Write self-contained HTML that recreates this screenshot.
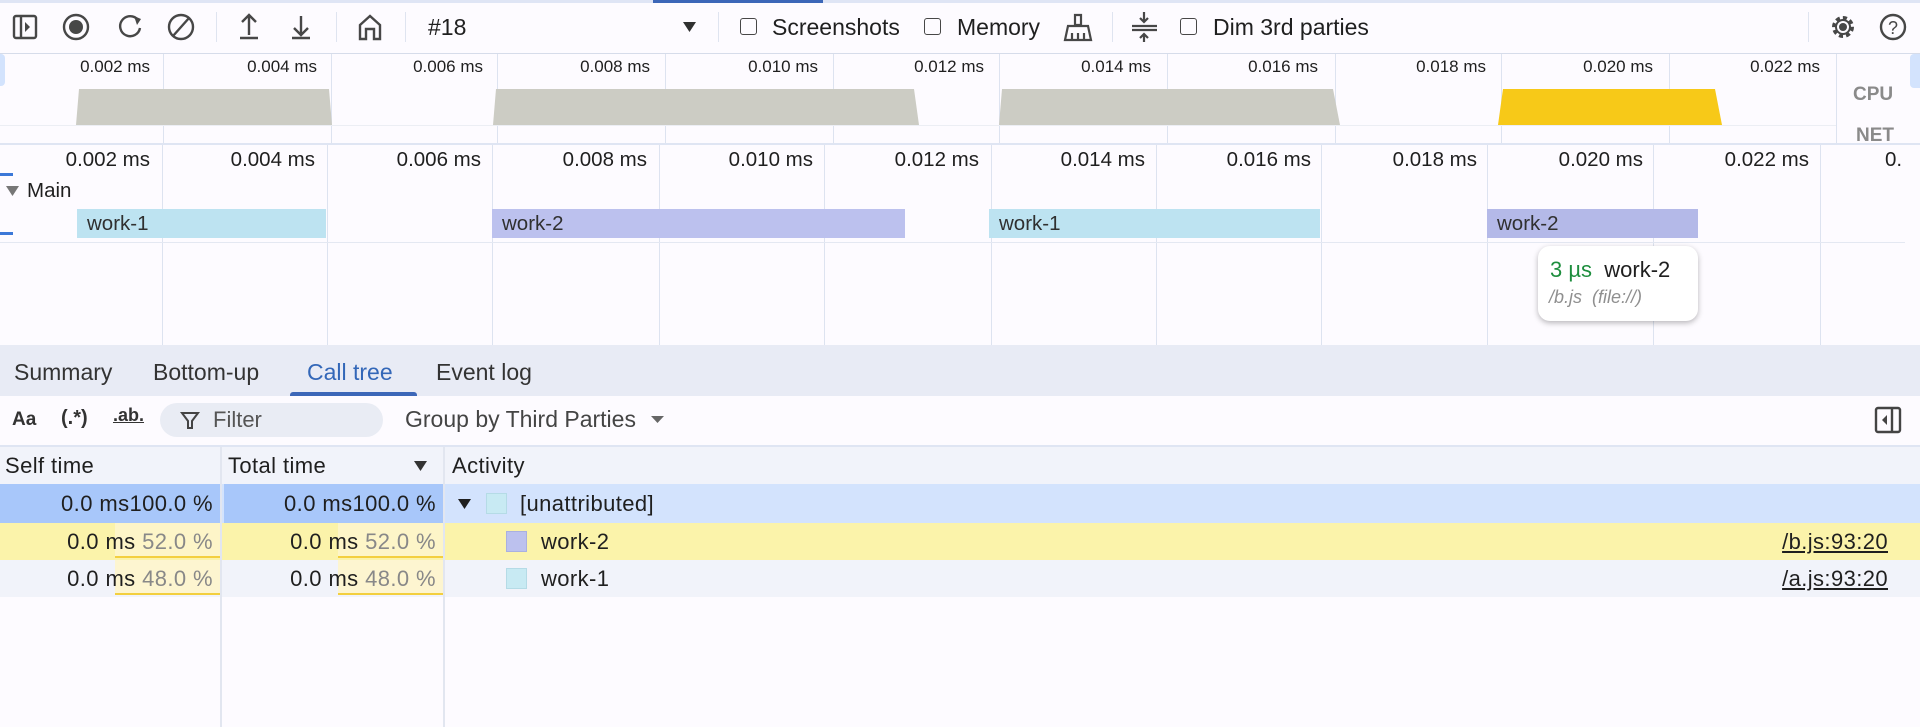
<!DOCTYPE html>
<html><head><meta charset="utf-8"><style>
*{box-sizing:border-box;margin:0;padding:0}
body{width:1920px;height:727px;overflow:hidden;background:#fdfbff;font-family:"Liberation Sans",Arial,sans-serif;color:#1f1f1f;position:relative}
.a{position:absolute;white-space:nowrap}
.vl{position:absolute;width:1px;background:#dde3f0}
.tl{position:absolute;font-size:17px;color:#1f1f1f;text-align:right;width:150px}
.fl{font-size:20.5px!important}
.cb{position:absolute;width:17px;height:17px;border:1.6px solid #474747;border-radius:3px;top:18px}
.bar{position:absolute;top:209px;height:29px;font-size:20.5px;line-height:29px;padding-left:10px;color:#303030}
.row{position:absolute;left:0;width:1920px;font-size:22px;letter-spacing:0.4px}
.c{position:absolute;top:0;height:100%;line-height:37px}
.tb{font-size:23px;color:#1f1f1f}
</style></head><body>
<div class="a" style="left:0;top:0;width:1920px;height:3px;background:#dfe5f5"></div>
<div class="a" style="left:653px;top:0;width:170px;height:3px;background:#3c67b8"></div>
<div class="a" style="left:0;top:53px;width:1920px;height:1px;background:#d6dcea"></div>
<svg class="a" style="left:0;top:0" width="1920" height="54">
<g fill="none" stroke="#474747" stroke-width="2.4">
<rect x="14" y="16" width="22" height="22" rx="2"/><line x1="21" y1="16" x2="21" y2="38"/>
<circle cx="76" cy="27" r="12"/>
<path d="M138 20 A10 10 0 1 0 140 28"/>
<circle cx="181" cy="27" r="12"/><line x1="173" y1="36" x2="189" y2="18"/>
<path d="M249 35V16M242 22l7-7 7 7M240 38h18"/>
<path d="M301 16v19M294 28l7 7 7-7M292 38h18"/>
<path d="M360 39V25l10-9 10 9v14h-6v-10h-8v10z"/>
<circle cx="1893" cy="27" r="12"/>
</g>
<path d="M25 22l5 5-5 5z" fill="#474747"/>
<circle cx="76" cy="27" r="7" fill="#474747"/>
<path d="M134 16l7 3-4 6z" fill="#474747"/>
<text x="1893" y="34" font-size="18" text-anchor="middle" fill="#474747" font-family="Liberation Sans">?</text>
<g fill="none" stroke="#474747" stroke-width="2.2">
<path d="M1075 15h6v10h-6zM1068 26h20l3 14h-26z"/><path d="M1072 33v7M1078 33v7M1084 33v7"/>
<path d="M1132 26h25M1132 30h25M1144 12v10M1140 18l4 4 4-4M1144 42v-8M1140 38l4-4 4 4"/>
</g>
<circle cx="1843" cy="27" r="4" fill="#474747"/>
<circle cx="1843" cy="27" r="9" fill="none" stroke="#474747" stroke-width="4" stroke-dasharray="4 3"/>
<circle cx="1843" cy="27" r="7" fill="none" stroke="#474747" stroke-width="2"/>
<g fill="#dfe4f0"><rect x="216" y="12" width="1" height="30"/><rect x="336" y="12" width="1" height="30"/><rect x="405" y="12" width="1" height="30"/><rect x="718" y="12" width="1" height="30"/><rect x="1112" y="12" width="1" height="30"/><rect x="1808" y="12" width="1" height="30"/></g>
<path d="M683 22h13l-6.5 10z" fill="#303030"/>
</svg>
<div class="a tb" style="left:428px;top:14px">#18</div>
<div class="cb" style="left:740px"></div><div class="a tb" style="left:772px;top:14px">Screenshots</div>
<div class="cb" style="left:924px"></div><div class="a tb" style="left:957px;top:14px">Memory</div>
<div class="cb" style="left:1180px"></div><div class="a tb" style="left:1213px;top:14px">Dim 3rd parties</div>
<div class="a" style="left:0;top:54px;width:5px;height:32px;background:#d3e3fd;border-radius:0 4px 4px 0"></div>
<div class="a" style="left:1910px;top:54px;width:10px;height:34px;background:#d3e3fd;border-radius:4px 0 0 4px"></div>
<div class="vl" style="left:163px;top:54px;height:89px"></div><div class="vl" style="left:331px;top:54px;height:89px"></div><div class="vl" style="left:497px;top:54px;height:89px"></div><div class="vl" style="left:665px;top:54px;height:89px"></div><div class="vl" style="left:833px;top:54px;height:89px"></div><div class="vl" style="left:999px;top:54px;height:89px"></div><div class="vl" style="left:1167px;top:54px;height:89px"></div><div class="vl" style="left:1335px;top:54px;height:89px"></div><div class="vl" style="left:1501px;top:54px;height:89px"></div><div class="vl" style="left:1669px;top:54px;height:89px"></div><div class="vl" style="left:1836px;top:54px;height:89px"></div>
<div class="tl" style="left:0;top:57px">0.002 ms</div><div class="tl" style="left:167px;top:57px">0.004 ms</div><div class="tl" style="left:333px;top:57px">0.006 ms</div><div class="tl" style="left:500px;top:57px">0.008 ms</div><div class="tl" style="left:668px;top:57px">0.010 ms</div><div class="tl" style="left:834px;top:57px">0.012 ms</div><div class="tl" style="left:1001px;top:57px">0.014 ms</div><div class="tl" style="left:1168px;top:57px">0.016 ms</div><div class="tl" style="left:1336px;top:57px">0.018 ms</div><div class="tl" style="left:1503px;top:57px">0.020 ms</div><div class="tl" style="left:1670px;top:57px">0.022 ms</div>
<svg class="a" style="left:0;top:54px" width="1920" height="90">
<g fill="#ccccc4"><path d="M76 71L79 35H329L332 71z"/><path d="M493 71L496 35H914L919 71z"/><path d="M999 71L1002 35H1333L1340 71z"/></g>
<path d="M1498 71L1503 35H1715L1722 71z" fill="#f7c918"/>
<rect x="0" y="71" width="1836" height="1" fill="#eceef4"/>
</svg>
<div class="a" style="left:1853px;top:84px;font-size:19px;font-weight:bold;color:#8a8a8a">CPU</div>
<div class="a" style="left:1856px;top:125px;font-size:19px;font-weight:bold;color:#8a8a8a">NET</div>
<div class="a" style="left:0;top:143px;width:1920px;height:2px;background:#dfe5f3"></div>
<div class="vl" style="left:162px;top:145px;height:200px"></div><div class="vl" style="left:327px;top:145px;height:200px"></div><div class="vl" style="left:492px;top:145px;height:200px"></div><div class="vl" style="left:659px;top:145px;height:200px"></div><div class="vl" style="left:824px;top:145px;height:200px"></div><div class="vl" style="left:991px;top:145px;height:200px"></div><div class="vl" style="left:1156px;top:145px;height:200px"></div><div class="vl" style="left:1321px;top:145px;height:200px"></div><div class="vl" style="left:1487px;top:145px;height:200px"></div><div class="vl" style="left:1653px;top:145px;height:200px"></div><div class="vl" style="left:1820px;top:145px;height:200px"></div>
<div class="a" style="left:0;top:242px;width:1905px;height:1px;background:#e4e8f2"></div>
<div class="tl fl" style="left:0px;top:148px">0.002 ms</div><div class="tl fl" style="left:165px;top:148px">0.004 ms</div><div class="tl fl" style="left:331px;top:148px">0.006 ms</div><div class="tl fl" style="left:497px;top:148px">0.008 ms</div><div class="tl fl" style="left:663px;top:148px">0.010 ms</div><div class="tl fl" style="left:829px;top:148px">0.012 ms</div><div class="tl fl" style="left:995px;top:148px">0.014 ms</div><div class="tl fl" style="left:1161px;top:148px">0.016 ms</div><div class="tl fl" style="left:1327px;top:148px">0.018 ms</div><div class="tl fl" style="left:1493px;top:148px">0.020 ms</div><div class="tl fl" style="left:1659px;top:148px">0.022 ms</div>
<div class="a" style="left:1885px;top:148px;font-size:20.5px">0.</div>
<div class="a" style="left:0;top:173px;width:13px;height:3px;background:#3c78d8"></div>
<div class="a" style="left:0;top:232px;width:13px;height:3px;background:#3c78d8"></div>
<svg class="a" style="left:6px;top:185px" width="14" height="12"><path d="M0 1h13L6.5 11z" fill="#777"/></svg>
<div class="a" style="left:27px;top:179px;font-size:20.5px">Main</div>
<div class="bar" style="left:77px;width:249px;background:#bde3f1">work-1</div>
<div class="bar" style="left:492px;width:413px;background:#bcc1ee">work-2</div>
<div class="bar" style="left:989px;width:331px;background:#bde3f1">work-1</div>
<div class="bar" style="left:1487px;width:211px;background:#b4b9e8">work-2</div>
<div class="a" style="left:1538px;top:246px;width:160px;height:75px;background:#fff;border-radius:12px;box-shadow:0 2px 6px rgba(0,0,0,.28)"></div>
<div class="a" style="left:1550px;top:257px;font-size:22px"><span style="color:#1e8e3e">3 µs</span>&nbsp; work-2</div>
<div class="a" style="left:1549px;top:287px;font-size:18px;color:#8f8f8f;font-style:italic">/b.js &nbsp;(file://)</div>
<div class="a" style="left:0;top:345px;width:1920px;height:51px;background:#e8ebf5"></div>
<div class="a" style="left:14px;top:359px;font-size:23px;color:#333">Summary</div>
<div class="a" style="left:153px;top:359px;font-size:23px;color:#333">Bottom-up</div>
<div class="a" style="left:307px;top:359px;font-size:23px;color:#3367b8">Call tree</div>
<div class="a" style="left:436px;top:359px;font-size:23px;color:#333">Event log</div>
<div class="a" style="left:290px;top:392px;width:127px;height:4px;background:#3c67b8;border-radius:3px 3px 0 0"></div>
<div class="a" style="left:12px;top:409px;font-size:19px;font-weight:bold;color:#333">Aa</div>
<div class="a" style="left:61px;top:407px;font-size:20px;font-weight:bold;color:#333">(.*)</div>
<div class="a" style="left:113px;top:405px;font-size:18px;font-weight:bold;color:#333;text-decoration:underline">.ab.</div>
<div class="a" style="left:160px;top:403px;width:223px;height:34px;background:#e9ecf4;border-radius:17px"></div>
<svg class="a" style="left:180px;top:410px" width="20" height="20"><path d="M2 3h16l-6 8v7h-4v-7z" fill="none" stroke="#444" stroke-width="2"/></svg>
<div class="a" style="left:213px;top:407px;font-size:22px;color:#555">Filter</div>
<div class="a" style="left:405px;top:406px;font-size:23px;color:#444">Group by Third Parties</div>
<svg class="a" style="left:651px;top:415px" width="14" height="10"><path d="M0 1h13L6.5 8z" fill="#666"/></svg>
<svg class="a" style="left:1874px;top:406px" width="28" height="28"><rect x="2" y="2" width="24" height="24" rx="2" fill="none" stroke="#444" stroke-width="2.4"/><line x1="18" y1="2" x2="18" y2="26" stroke="#444" stroke-width="2.4"/><path d="M13 9v10l-5-5z" fill="#444"/></svg>
<div class="a" style="left:0;top:445px;width:1920px;height:2px;background:#dfe5f3"></div>
<div class="row" style="top:447px;height:37px;background:#f1f3fa">
<div class="c" style="left:5px">Self time</div><div class="c" style="left:228px">Total time</div><div class="c" style="left:452px">Activity</div>
<svg class="a" style="left:414px;top:13px" width="14" height="12"><path d="M0 1h13L6.5 11z" fill="#333"/></svg>
</div>
<div class="row" style="top:484px;height:39px;background:#d3e3fd">
<div class="c" style="left:0;width:220px;background:#a8c7fa;text-align:right;padding-right:7px;line-height:39px">0.0 ms100.0 %</div>
<div class="c" style="left:224px;width:219px;background:#a8c7fa;text-align:right;padding-right:7px;line-height:39px">0.0 ms100.0 %</div>
<svg class="a" style="left:458px;top:14px" width="14" height="12"><path d="M0 1h13L6.5 11z" fill="#1f1f1f"/></svg>
<div class="a" style="left:486px;top:9px;width:21px;height:21px;background:#c8eaf3;border:1px solid #b5dbe6"></div>
<div class="c" style="left:520px;line-height:39px">[unattributed]</div>
</div>
<div class="row" style="top:523px;height:37px;background:#fbf3aa">
<div class="a" style="left:115px;top:0;width:105px;height:35px;background:#fdf5c8;border-bottom:2px solid #f3cf3f"></div>
<div class="a" style="left:338px;top:0;width:105px;height:35px;background:#fdf5c8;border-bottom:2px solid #f3cf3f"></div>
<div class="c" style="left:0;width:213px;text-align:right">0.0 ms <span style="color:#888">52.0 %</span></div>
<div class="c" style="left:224px;width:212px;text-align:right">0.0 ms <span style="color:#888">52.0 %</span></div>
<div class="a" style="left:506px;top:8px;width:21px;height:21px;background:#bcc1ee;border:1px solid #aab0e0"></div>
<div class="c" style="left:541px">work-2</div>
<div class="c" style="right:32px;text-decoration:underline">/b.js:93:20</div>
</div>
<div class="row" style="top:560px;height:37px;background:#f1f3fa">
<div class="a" style="left:115px;top:0;width:105px;height:35px;background:#fdf5d0;border-bottom:2px solid #f3cf3f"></div>
<div class="a" style="left:338px;top:0;width:105px;height:35px;background:#fdf5d0;border-bottom:2px solid #f3cf3f"></div>
<div class="c" style="left:0;width:213px;text-align:right">0.0 ms <span style="color:#888">48.0 %</span></div>
<div class="c" style="left:224px;width:212px;text-align:right">0.0 ms <span style="color:#888">48.0 %</span></div>
<div class="a" style="left:506px;top:8px;width:21px;height:21px;background:#c8eaf3;border:1px solid #b5dbe6"></div>
<div class="c" style="left:541px">work-1</div>
<div class="c" style="right:32px;text-decoration:underline">/a.js:93:20</div>
</div>
<div class="a" style="left:220px;top:447px;width:2px;height:280px;background:#e2e6f0"></div>
<div class="a" style="left:443px;top:447px;width:2px;height:280px;background:#e2e6f0"></div>
</body></html>
